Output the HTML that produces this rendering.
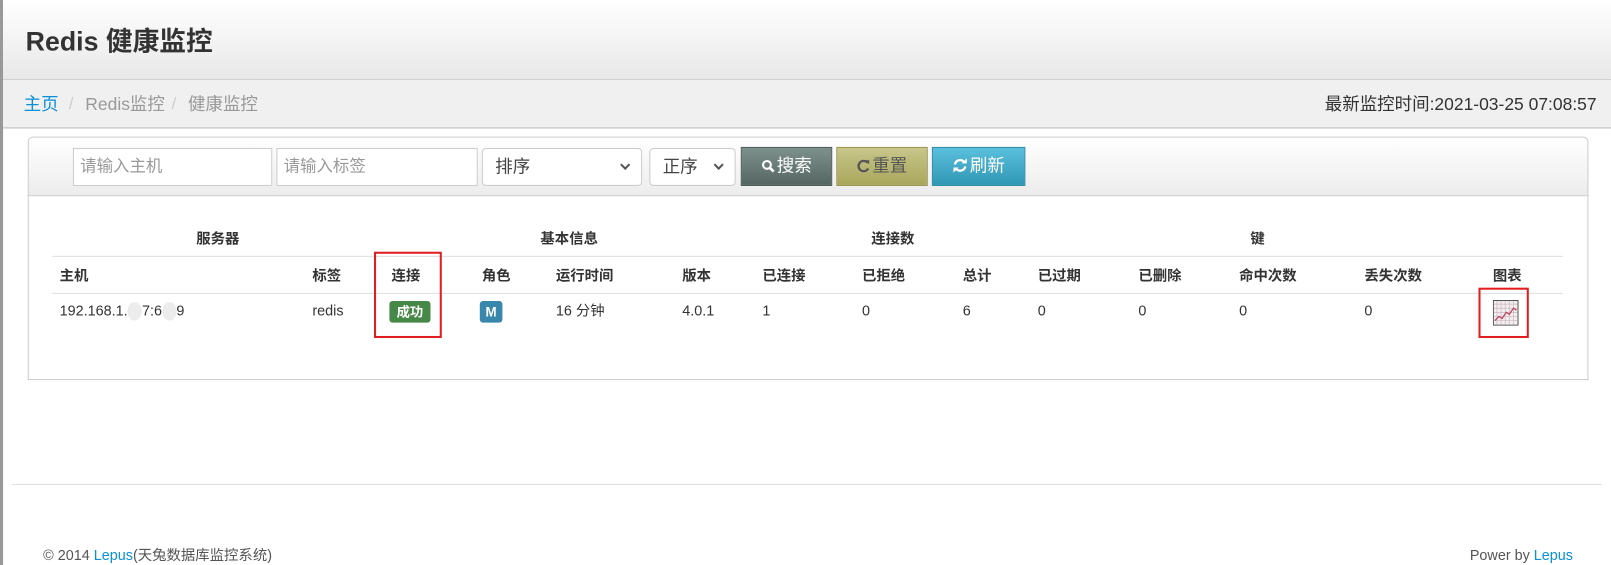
<!DOCTYPE html>
<html><head><meta charset="utf-8"><style>
*{box-sizing:border-box;margin:0;padding:0}
body{width:1611px;height:565px;background:#fff;font-family:"Liberation Sans","Noto Sans CJK SC",sans-serif;color:#333;overflow:hidden;font-size:14px}
#w{position:absolute;left:0;top:0;width:1568px;height:550px;transform:scale(1.02743);transform-origin:0 0}
.a{position:absolute;white-space:nowrap;line-height:1.15}
#lb{left:0;top:0;width:3px;height:550px;background:#999}
#hd{left:3px;top:0;width:1565px;height:78px;background:linear-gradient(#fff,#e8e8e8);border-bottom:1px solid #ccc}
#hd h1{position:absolute;left:22px;top:26px;font-size:26px;font-weight:bold;color:#333;line-height:1.15}
#bc{left:3px;top:78px;width:1565px;height:47px;background:#f0f0f0;border-bottom:1px solid #bbb;font-size:17px}
#sb{left:27px;top:133px;width:1519px;height:58px;border:1px solid #ccc;border-radius:5px 5px 0 0;background:linear-gradient(#fff,#ececec)}
.in{position:absolute;top:10px;height:37px;border:1px solid #ccc;background:#fff;font-size:16px;color:#999;padding:0 6px;line-height:35px}
.sel{position:absolute;top:10px;height:37px;border:1px solid #ccc;border-radius:4px;background:#fff;font-size:17px;color:#444;padding:0 12px;line-height:35px}
.sel i{position:absolute;right:12px;top:12px;width:7px;height:7px;border-right:2px solid #555;border-bottom:2px solid #555;transform:rotate(45deg)}
.bt{position:absolute;top:9px;height:38px;font-size:17px;color:#fff;line-height:36px;text-align:center;border:1px solid}
.bt svg{vertical-align:-1px;margin-right:2px}
#tb{left:27px;top:190px;width:1519px;height:180px;border:1px solid #ccc;border-top:none}
.th{font-weight:bold;font-size:14px;color:#333}
.ln{position:absolute;left:51px;width:1470px;height:1px;background:#ddd}
.td{font-size:14px;color:#333}
.red{position:absolute;border:2px solid #e02020}
.dot{display:inline-block;width:14px;height:18px;border-radius:50%;background:#ececec;vertical-align:middle}
</style></head><body><div id="w">
<div class="a" id="lb"></div>
<div class="a" id="hd"><h1>Redis 健康监控</h1></div>
<div class="a" id="bc">
<span class="a" style="left:20px;top:14px;color:#0a8fd8">主页</span>
<span class="a" style="left:64px;top:15px;color:#ccc;font-size:16px">/</span>
<span class="a" style="left:80px;top:14px;color:#999">Redis监控</span>
<span class="a" style="left:164px;top:15px;color:#ccc;font-size:16px">/</span>
<span class="a" style="left:180px;top:14px;color:#999">健康监控</span>
<span class="a" style="right:14px;top:14px;color:#333">最新监控时间:2021-03-25 07:08:57</span>
</div>
<div class="a" id="sb">
<div class="in" style="left:43px;width:194px">请输入主机</div>
<div class="in" style="left:241px;width:196px">请输入标签</div>
<div class="sel" style="left:441px;width:156px">排序<i></i></div>
<div class="sel" style="left:604px;width:84px">正序<i></i></div>
<div class="bt" style="left:693px;width:89px;background:linear-gradient(#7d918c,#566662);border-color:#4b5956"><svg width="13" height="13" viewBox="0 0 13 13"><circle cx="5.5" cy="5.5" r="3.8" fill="none" stroke="#fff" stroke-width="2"/><path d="M8.3 8.3L12 12" stroke="#fff" stroke-width="2.6"/></svg>搜索</div>
<div class="bt" style="left:786px;width:89px;background:linear-gradient(#c8c68a,#a8a65c);border-color:#999650;color:#555"><svg width="13" height="13" viewBox="0 0 13 13"><path d="M10.5 3.5A5 5 0 1 0 11 9" fill="none" stroke="#555" stroke-width="2.2"/><path d="M8 1L12 1L12 5Z" fill="#555"/></svg>重置</div>
<div class="bt" style="left:879px;width:91px;background:linear-gradient(#5bc0de,#2f96b4);border-color:#2a8aa5"><svg width="15" height="14" viewBox="0 0 15 14"><path d="M2.5 6A5 5 0 0 1 11.5 4M12.5 8A5 5 0 0 1 3.5 10" fill="none" stroke="#fff" stroke-width="2.2"/><path d="M9 5L14 5L14 0ZM6 9L1 9L1 14Z" fill="#fff"/></svg>刷新</div>
</div>
<div class="a" id="tb"></div>
<span class="a th" style="left:191px;top:224px">服务器</span>
<span class="a th" style="left:526px;top:224px">基本信息</span>
<span class="a th" style="left:848px;top:224px">连接数</span>
<span class="a th" style="left:1217px;top:224px">键</span>
<div class="ln" style="top:249px"></div>
<span class="a th" style="left:58px;top:260px">主机</span>
<span class="a th" style="left:304px;top:260px">标签</span>
<span class="a th" style="left:381px;top:260px">连接</span>
<span class="a th" style="left:469px;top:260px">角色</span>
<span class="a th" style="left:541px;top:260px">运行时间</span>
<span class="a th" style="left:664px;top:260px">版本</span>
<span class="a th" style="left:742px;top:260px">已连接</span>
<span class="a th" style="left:839px;top:260px">已拒绝</span>
<span class="a th" style="left:937px;top:260px">总计</span>
<span class="a th" style="left:1010px;top:260px">已过期</span>
<span class="a th" style="left:1108px;top:260px">已删除</span>
<span class="a th" style="left:1206px;top:260px">命中次数</span>
<span class="a th" style="left:1328px;top:260px">丢失次数</span>
<span class="a th" style="left:1453px;top:260px">图表</span>
<div class="ln" style="top:285px"></div>
<span class="a td" style="left:58px;top:294px">192.168.1.<span class="dot"></span>7:6<span class="dot"></span>9</span>
<span class="a td" style="left:304px;top:294px">redis</span>
<span class="a" style="left:379px;top:293px;width:40px;height:21px;background:#468847;border-radius:3px;color:#fff;font-weight:bold;font-size:13px;text-align:center;line-height:21px">成功</span>
<span class="a" style="left:467px;top:293px;width:22px;height:21px;background:#3a87ad;border-radius:3px;color:#fff;font-weight:bold;font-size:13px;text-align:center;line-height:21px">M</span>
<span class="a td" style="left:541px;top:294px">16 分钟</span>
<span class="a td" style="left:664px;top:294px">4.0.1</span>
<span class="a td" style="left:742px;top:294px">1</span>
<span class="a td" style="left:839px;top:294px">0</span>
<span class="a td" style="left:937px;top:294px">6</span>
<span class="a td" style="left:1010px;top:294px">0</span>
<span class="a td" style="left:1108px;top:294px">0</span>
<span class="a td" style="left:1206px;top:294px">0</span>
<span class="a td" style="left:1328px;top:294px">0</span>
<svg class="a" style="left:1453px;top:292px" width="25" height="25" viewBox="0 0 25 25">
<rect x="0.5" y="0.5" width="24" height="24" fill="#f4eef0" stroke="#555"/>
<path d="M4 1V24M8 1V24M12 1V24M16 1V24M20 1V24M1 4H24M1 8H24M1 12H24M1 16H24M1 20H24" stroke="#c8b8c0" stroke-width="0.7"/>
<path d="M2 20L6 16L9 18L13 12L16 14L20 8L23 10" fill="none" stroke="#c04060" stroke-width="1.2"/>
</svg>
<div class="red" style="left:364px;top:245px;width:66px;height:84px"></div>
<div class="red" style="left:1439px;top:280px;width:49px;height:49px"></div>
<div class="a" style="left:12px;top:471px;width:1547px;height:1px;background:#ddd"></div>
<span class="a" style="left:42px;top:532px;color:#555;font-size:14px">© 2014 <span style="color:#0a8fd8">Lepus</span>(天兔数据库监控系统)</span>
<span class="a" style="right:37px;top:532px;color:#555;font-size:14px">Power by <span style="color:#0a8fd8">Lepus</span></span>
</div></body></html>
